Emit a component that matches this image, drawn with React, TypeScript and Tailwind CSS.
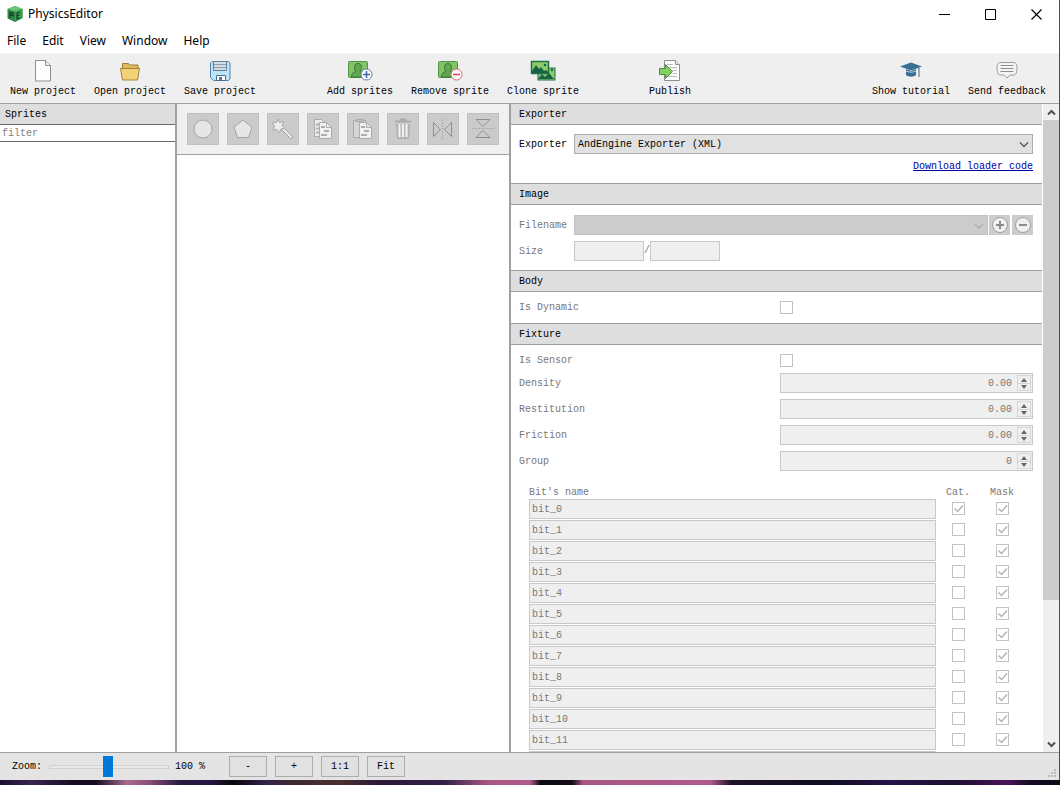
import React, { useState } from "react";

const NewIcon = () => (
  <svg width="24" height="24" viewBox="0 0 24 24">
    <path d="M4.500 1.500h10l5 5v15.500h-15z" fill="#fdfdfd" stroke="#8f8f8f" />
    <path d="M14.500 1.500v5h5" fill="#ececec" stroke="#8f8f8f" />
  </svg>
);

const OpenIcon = () => (
  <svg width="24" height="24" viewBox="0 0 24 24">
    <path d="M4.500 9V4.500h6l1.500 1.500h8V9" fill="#e5bd58" stroke="#9c7c3a" />
    <path d="M2.500 9.500h19l-2 11.500h-15z" fill="#f3d277" stroke="#a5823c" />
  </svg>
);

const SaveIcon = () => (
  <svg width="24" height="24" viewBox="0 0 24 24">
    <path d="M4.500 2.500h16l1.500 1.500v16l-1.500 1.500h-15l-3-3V4z" fill="#bfe3f7" stroke="#4a86ad" />
    <path d="M5.500 2.500h13v9h-13z" fill="#d5dce2" stroke="#5b7f98" />
    <path d="M6 5.500h12M6 8.500h12" stroke="#8d9fae" />
    <path d="M8.500 16.500h9v5h-9z" fill="#fff" stroke="#4a6f8c" />
    <path d="M11 18h3v3h-3z" fill="#5f7787" />
  </svg>
);

function PersonCard() {
  return (
    <>
      <rect x="1.500" y="2.500" width="19" height="16" rx="1" fill="#83c369" stroke="#4c9447" />
      <path d="M4.500 18c0-3.500 1.500-4.500 4.500-5.500C6.500 9 7 4.500 11 4.500s4.500 4.500 2 8c3 1 4.500 2 4.500 5.500z" fill="#62a852" stroke="#357a38" />
    </>
  );
}

const AddIcon = () => (
  <svg width="26" height="24" viewBox="0 0 26 24">
    <PersonCard />
    <circle cx="19.500" cy="15.500" r="5.500" fill="#fff" stroke="#5b78ad" />
    <path d="M16 15.500h7M19.500 12v7" stroke="#3e62a3" strokeWidth="1.500" />
  </svg>
);

const RemoveIcon = () => (
  <svg width="26" height="24" viewBox="0 0 26 24">
    <PersonCard />
    <circle cx="19.500" cy="15.500" r="5.500" fill="#fff" stroke="#dc6468" />
    <path d="M16 15.500h7" stroke="#dc3f46" strokeWidth="1.500" />
  </svg>
);

const CloneIcon = () => (
  <svg width="26" height="24" viewBox="0 0 26 24">
    <rect x="8" y="9" width="17" height="12" fill="#8fcc6c" stroke="#20724a" />
    <path d="M8 20l4-5 3 3 4-4 5 6z" fill="#176344" />
    <circle cx="22" cy="11" r="1.200" fill="#176344" />
    <rect x="1.500" y="2.500" width="17" height="12" fill="#8fcc6c" stroke="#20724a" strokeWidth="1.500" />
    <path d="M2 14V12l4-6 3 4 2-2 3 4 2-1 2 2v1z" fill="#176344" />
    <circle cx="15" cy="6" r="1.300" fill="#176344" />
  </svg>
);

const PublishIcon = () => (
  <svg width="24" height="24" viewBox="0 0 24 24">
    <path d="M6.500 1.500h11l4 4v16h-15z" fill="#fbfbfb" stroke="#8f8f8f" />
    <path d="M17.500 1.500v4h4" fill="#e6e6e6" stroke="#8f8f8f" />
    <path d="M9 5.500h6M9 8.500h10M15 11.500h4M15 14.500h4M9 17.500h10" stroke="#bcbcbc" />
    <path d="M1.500 9.500h6v-4l7 7-7 7v-4h-6z" fill="#83cf62" stroke="#4a9140" />
  </svg>
);

const TutorialIcon = () => (
  <svg width="24" height="24" viewBox="0 0 24 24">
    <path d="M7 10v6c2 2.300 8 2.300 10 0v-6l-5 2z" fill="#3a6f94" />
    <path d="M1 7.500l11-4 11 4-11 4z" fill="#3a6f94" />
    <path d="M12 7.500l8 1.500v9" fill="none" stroke="#3a6f94" />
    <path d="M7 12c3 1.500 7 1.500 10 0" fill="none" stroke="#dfe7ec" strokeWidth="0.800" />
  </svg>
);

const FeedbackIcon = () => (
  <svg width="24" height="24" viewBox="0 0 24 24">
    <path d="M5.500 3.500h13c2.500 0 3.500 2 3.500 6s-1 6.500-3.500 6.500H15L12 19l-3-3H5.500C3 16 2 13.500 2 9.500s1-6 3.500-6z" fill="#f4f4f4" stroke="#999" />
    <path d="M5.500 6.500h13M5.500 9.500h13M5.500 12.500h13" stroke="#8e8e8e" />
  </svg>
);

const fileTools = [
  { label: "New project", icon: <NewIcon /> },
  { label: "Open project", icon: <OpenIcon /> },
  { label: "Save project", icon: <SaveIcon /> },
];
const spriteTools = [
  { label: "Add sprites", icon: <AddIcon /> },
  { label: "Remove sprite", icon: <RemoveIcon /> },
  { label: "Clone sprite", icon: <CloneIcon /> },
];
const publishTools = [{ label: "Publish", icon: <PublishIcon /> }];
const helpTools = [
  { label: "Show tutorial", icon: <TutorialIcon /> },
  { label: "Send feedback", icon: <FeedbackIcon /> },
];

function ToolGroup({ tools }: { tools: { label: string; icon: React.ReactNode }[] }) {
  return (
    <div className="flex gap-[18px]">
      {tools.map((t) => (
        <button key={t.label} className="flex flex-col items-center gap-[3px] whitespace-nowrap">
          {t.icon}
          <span className="leading-3">{t.label}</span>
        </button>
      ))}
    </div>
  );
}

const shapeTools = [
  {
    label: "Add circle",
    icon: <circle cx="16" cy="16" r="9" fill="#e6e6e6" stroke="#a5a5a5" />,
  },
  {
    label: "Add polygon",
    icon: <path d="M16 7l9 7-3.500 10.500h-11L7 14z" fill="#e6e6e6" stroke="#a5a5a5" />,
  },
  {
    label: "Trace shape",
    icon: (
      <>
        <path d="M14.500 16.500l2-2 9.500 9.500-2 2z" fill="#e9e9e9" stroke="#a0a0a0" />
        <path d="M11 6l1.500 3.500 4.500-1-2 4 3 3-4 .5-1.500 3.500-2.500-3-4 .5 1.500-4L5 10l4.500-.5z" fill="#ececec" stroke="#a8a8a8" />
      </>
    ),
  },
  {
    label: "Copy shapes",
    icon: (
      <>
        <path d="M7.500 6.500h7l3 3v14h-10z" fill="#ececec" stroke="#adadad" />
        <path d="M9 11.500h4M9 15.500h3M9 19.500h3" stroke="#b0b0b0" strokeWidth="2" />
        <path d="M12.500 9.500h7l5 5v11h-12z" fill="#f1f1f1" stroke="#adadad" />
        <path d="M19.500 9.500v5h5" fill="none" stroke="#adadad" />
        <path d="M14 14h4M17 18h5M14 22h6" stroke="#adadad" strokeWidth="2" />
      </>
    ),
  },
  {
    label: "Paste shapes",
    icon: (
      <>
        <path d="M6.500 7.500h12v17h-12z" fill="#d6d6d6" stroke="#a8a8a8" />
        <path d="M9 6.500h7v2H9z" fill="#c2c2c2" stroke="#ababab" />
        <path d="M12.500 9.500h7l5 5v11h-12z" fill="#f1f1f1" stroke="#adadad" />
        <path d="M19.500 9.500v5h5" fill="none" stroke="#adadad" />
        <path d="M14 14h4M17 18h5M14 22h6" stroke="#adadad" strokeWidth="2" />
      </>
    ),
  },
  {
    label: "Delete shapes",
    icon: (
      <>
        <path d="M8 8.500h16M13 6.500h6" stroke="#ababab" strokeWidth="2" />
        <path d="M9.500 11.500h13l-1 14h-11z" fill="#b8b8b8" stroke="#adadad" />
        <path d="M12.500 11v13M16 11v13M19.500 11v13" stroke="#f1f1f1" strokeWidth="2" />
      </>
    ),
  },
  {
    label: "Flip horizontally",
    icon: (
      <>
        <path d="M6.500 9.500v14l7-7zM24.500 9.500v14l-7-7z" fill="none" stroke="#8e8e8e" />
        <path d="M15.500 6v20" stroke="#acacac" strokeDasharray="2 1" />
      </>
    ),
  },
  {
    label: "Flip vertically",
    icon: (
      <>
        <path d="M9 6.500h14l-7 7zM9 24.500h14l-7-7z" fill="none" stroke="#8e8e8e" />
        <path d="M5 15.500h23" stroke="#acacac" strokeDasharray="2 1" />
      </>
    ),
  },
];

function SectionHeader({ title, first }: { title: string; first?: boolean }) {
  return (
    <h2
      className={
        "flex h-[22px] items-center border-y border-[#a0a0a0] bg-[#dedede] pt-0.5 pl-2 text-black " +
        (first ? "-mt-px" : "")
      }
    >
      {title}
    </h2>
  );
}

function Check({ id, label, checked }: { id?: string; label?: string; checked?: boolean }) {
  return (
    <span className="relative block size-[13px]">
      <input
        id={id}
        type="checkbox"
        aria-label={label}
        defaultChecked={checked}
        disabled
        className="peer block size-[13px] appearance-none border border-[#c3c3c3] bg-white"
      />
      <svg viewBox="0 0 13 13" className="pointer-events-none absolute inset-0 hidden peer-checked:block">
        <path d="M2.500 6.500l3 3 5.500-6" fill="none" stroke="#b5b5b5" strokeWidth="1.500" />
      </svg>
    </span>
  );
}

function SpinRow({ id, label, value }: { id: string; label: string; value: string }) {
  return (
    <>
      <label htmlFor={id} className="pt-0.5">{label}</label>
      <div className="flex h-5 items-center border border-[#c8c8c8] bg-[#efefef] pr-px">
        <input id={id} defaultValue={value} disabled className="min-w-0 flex-1 pt-px pr-[5px] text-right" />
        <div className="flex w-3.5 flex-col border border-[#d6d6d6]">
          <button disabled aria-label={label + " up"} className="flex h-[7px] items-center justify-center">
            <svg width="6" height="4" viewBox="0 0 6 4"><path d="M0 4l3-4 3 4z" fill="#666" /></svg>
          </button>
          <button disabled aria-label={label + " down"} className="flex h-[7px] items-center justify-center border-t border-[#d6d6d6]">
            <svg width="6" height="4" viewBox="0 0 6 4"><path d="M0 0l3 4 3-4z" fill="#666" /></svg>
          </button>
        </div>
      </div>
    </>
  );
}

const spins = [
  { id: "density", label: "Density", value: "0.00" },
  { id: "restitution", label: "Restitution", value: "0.00" },
  { id: "friction", label: "Friction", value: "0.00" },
  { id: "group", label: "Group", value: "0" },
];
const bits = Array.from({ length: 16 }, (_, i) => "bit_" + i);
const menus = ["File", "Edit", "View", "Window", "Help"];
const zoomButtons = ["-", "+", "1:1", "Fit"];

export default function App() {
  const [zoom, setZoom] = useState(100);
  const [filter, setFilter] = useState("");

  return (
    <div className="flex h-screen flex-col bg-[#140d20] font-['Liberation_Mono',monospace] text-[10px] leading-3 text-black">
      <div className="flex min-h-0 flex-1 flex-col border-r border-[#4b4b58] bg-white">
        {/* title bar */}
        <header className="flex h-7 shrink-0 items-center pl-[7px] font-['Noto_Sans',sans-serif] text-xs">
          <svg width="16" height="16" viewBox="0 0 16 16">
            <path d="M8 0l7.500 3v9L8 16 .5 12.500V3z" fill="#2d8a45" />
            <path d="M8 0l7.500 3L8 5.500.5 3z" fill="#6cc47b" />
            <path d="M8 5.500L15.500 3v9L8 16z" fill="#38a053" />
            <path d="M3 12V6.500l3 .8v2.500l-3-.6M13 6.500l-3 .8v5.500l3-1M10 10l2.500-.8" fill="none" stroke="#123d1f" strokeWidth="1.200" />
          </svg>
          <h1 className="flex-1 pl-[5px]">PhysicsEditor</h1>
          <button aria-label="Minimize" className="flex h-7 w-[46px] items-center justify-center">
            <svg width="11" height="11" viewBox="0 0 11 11"><path d="M0 5.500h11" stroke="#000" /></svg>
          </button>
          <button aria-label="Maximize" className="flex h-7 w-[46px] items-center justify-center">
            <svg width="11" height="11" viewBox="0 0 11 11"><path d="M.5.5h10v10H.5z" fill="none" stroke="#000" /></svg>
          </button>
          <button aria-label="Close" className="flex h-7 w-[46px] items-center justify-center">
            <svg width="11" height="11" viewBox="0 0 11 11"><path d="M.5.5l10 10M10.500.5l-10 10" stroke="#000" strokeWidth="1.200" /></svg>
          </button>
        </header>

        <nav className="flex h-[26px] shrink-0 items-center gap-4 border-b border-[#f0f0f0] pt-px pl-[7px] font-['Noto_Sans',sans-serif] text-xs">
          {menus.map((m) => (
            <button key={m}>{m}</button>
          ))}
        </nav>

        {/* main toolbar */}
        <div className="flex h-[50px] shrink-0 items-center border-b border-[#a0a0a0] bg-[#efefef] pr-[13px] pl-2.5">
          <ToolGroup tools={fileTools} />
          <div className="w-[71px]" />
          <ToolGroup tools={spriteTools} />
          <div className="w-[70px]" />
          <ToolGroup tools={publishTools} />
          <div className="flex-1" />
          <ToolGroup tools={helpTools} />
        </div>

        <main className="flex min-h-0 flex-1">
          {/* sprites list */}
          <aside className="w-[177px] shrink-0 border-r-2 border-[#a0a0a0]">
            <h2 className="flex h-5 items-center bg-[#dedede] pt-0.5 pl-[5px]">Sprites</h2>
            <input
              aria-label="Filter sprites"
              placeholder="filter"
              value={filter}
              onChange={(e) => setFilter(e.target.value)}
              autoFocus
              className="block h-[18px] w-full border-y border-[#6a6a6a] bg-white pl-0.5 outline-none placeholder:text-[#808080]"
            />
          </aside>

          {/* canvas */}
          <section className="w-[334px] shrink-0 border-r-2 border-[#a0a0a0]">
            <div className="flex h-[51px] items-center gap-2 border-b border-[#a0a0a0] bg-[#f0f0f0] pl-2.5">
              {shapeTools.map((t) => (
                <button key={t.label} aria-label={t.label} disabled className="size-8 bg-[#cbcbcb] outline outline-offset-[-1px] outline-[#c0c0c0]">
                  <svg width="32" height="32" viewBox="0 0 32 32">{t.icon}</svg>
                </button>
              ))}
            </div>
          </section>

          {/* properties */}
          <section className="flex min-w-0 flex-1 gap-px">
            <div className="min-w-0 flex-1 overflow-y-auto text-[#787878] [scrollbar-width:none]">
              <SectionHeader title="Exporter" first />
              <div className="pt-[9px] pr-[9px] pb-2.5 pl-2 text-black">
                <div className="flex items-center">
                  <label htmlFor="exporter" className="w-[55px] pt-0.5">Exporter</label>
                  <div className="relative flex-1">
                    <select id="exporter" className="block h-5 w-full appearance-none border border-[#adadad] bg-[#e1e1e1] pt-0.5 pl-[3px]">
                      <option>AndEngine Exporter (XML)</option>
                    </select>
                    <svg width="10" height="6" viewBox="0 0 10 6" className="pointer-events-none absolute top-[8px] right-1">
                      <path d="M1 .5l4 4 4-4" fill="none" stroke="#555" strokeWidth="1.300" />
                    </svg>
                  </div>
                </div>
                <div className="mt-[7px] text-right">
                  <a href="#loader" className="block text-[#0000a8] underline">Download loader code</a>
                </div>
              </div>

              <SectionHeader title="Image" />
              <div className="flex flex-col gap-1.5 pt-2.5 pr-[9px] pb-[9px] pl-2">
                <div className="flex items-center">
                  <label htmlFor="filename" className="w-[55px] pt-0.5">Filename</label>
                  <div className="relative flex-1">
                    <select id="filename" disabled className="block h-5 w-full appearance-none border border-[#c2c2c2] bg-[#cccccc] opacity-100" />
                    <svg width="10" height="6" viewBox="0 0 10 6" className="pointer-events-none absolute top-[8px] right-1">
                      <path d="M1 1l4 4 4-4" fill="none" stroke="#adadad" strokeWidth="1.300" />
                    </svg>
                  </div>
                  <button disabled aria-label="Add image" className="ml-px flex h-5 w-[21px] items-center justify-center bg-[#cccccc]">
                    <svg width="18" height="18" viewBox="0 0 18 18">
                      <circle cx="9" cy="9" r="7.500" fill="#f0f0f0" stroke="#a0a0a0" />
                      <path d="M5 9h8M9 5v8" stroke="#8c8c8c" strokeWidth="2" />
                    </svg>
                  </button>
                  <button disabled aria-label="Remove image" className="ml-0.5 flex h-5 w-[21px] items-center justify-center bg-[#cccccc]">
                    <svg width="18" height="18" viewBox="0 0 18 18">
                      <circle cx="9" cy="9" r="7.500" fill="#f0f0f0" stroke="#a0a0a0" />
                      <path d="M5 9h8" stroke="#8c8c8c" strokeWidth="2" />
                    </svg>
                  </button>
                </div>
                <div className="flex items-center">
                  <label htmlFor="width" className="w-[55px] pt-0.5">Size</label>
                  <input id="width" disabled className="h-5 w-[70px] border border-[#c8c8c8] bg-[#efefef]" />
                  <span>/</span>
                  <input aria-label="Height" disabled className="h-5 w-[70px] border border-[#c8c8c8] bg-[#efefef]" />
                </div>
              </div>

              <SectionHeader title="Body" />
              <div className="grid grid-cols-2 items-center gap-2 py-[9px] pr-[9px] pl-2">
                <label htmlFor="dynamic">Is Dynamic</label>
                <Check id="dynamic" />
              </div>

              <SectionHeader title="Fixture" />
              <div className="grid grid-cols-2 items-center gap-x-2 gap-y-1.5 pt-[9px] pr-[9px] pl-2">
                <label htmlFor="sensor">Is Sensor</label>
                <Check id="sensor" />
                {spins.map((s) => (
                  <SpinRow key={s.id} id={s.id} label={s.label} value={s.value} />
                ))}
              </div>

              <div className="px-[18px] pt-[15px] pb-4">
                <table className="w-full table-fixed">
                  <thead>
                    <tr className="h-[13px]">
                      <th className="p-0 text-left font-normal">Bit's name</th>
                      <th className="w-11 p-0 font-normal">Cat.</th>
                      <th className="w-11 p-0 font-normal">Mask</th>
                    </tr>
                  </thead>
                  <tbody>
                    {bits.map((b, i) => (
                      <tr key={b} className="h-[21px]">
                        <td className="p-0 align-top">
                          <input aria-label={b + " name"} defaultValue={b} disabled className="block h-5 w-full border border-[#c8c8c8] bg-[#efefef] pl-0.5" />
                        </td>
                        <td className="p-0 align-top">
                          <div className="flex justify-center pt-[3px]"><Check label={b + " category"} checked={i === 0} /></div>
                        </td>
                        <td className="p-0 align-top">
                          <div className="flex justify-center pt-[3px]"><Check label={b + " mask"} checked /></div>
                        </td>
                      </tr>
                    ))}
                  </tbody>
                </table>
              </div>
            </div>

            {/* scroll bar */}
            <div className="flex w-4 shrink-0 flex-col bg-[#efefef]">
              <button aria-label="Scroll up" className="flex h-4 items-center justify-center">
                <svg width="9" height="7" viewBox="0 0 9 7"><path d="M1 5.500L4.500 2 8 5.500" fill="none" stroke="#505050" strokeWidth="2" /></svg>
              </button>
              <div className="flex-1">
                <div className="h-[78%] bg-[#cdcdcd]" />
              </div>
              <button aria-label="Scroll down" className="flex h-4 items-center justify-center">
                <svg width="9" height="7" viewBox="0 0 9 7"><path d="M1 1.500L4.500 5 8 1.500" fill="none" stroke="#505050" strokeWidth="2" /></svg>
              </button>
            </div>
          </section>
        </main>

        {/* status bar */}
        <footer className="flex h-7 shrink-0 items-center border-t border-[#a0a0a0] bg-[#e4e4e4] pr-0.5 pl-3">
          <label htmlFor="zoom" className="w-[37px]">Zoom:</label>
          <input
            id="zoom"
            type="range"
            min="0"
            max="202"
            value={zoom}
            onChange={(e) => setZoom(Number(e.target.value))}
            className="h-[21px] w-[120px] appearance-none bg-transparent [&::-webkit-slider-runnable-track]:h-1 [&::-webkit-slider-runnable-track]:border [&::-webkit-slider-runnable-track]:border-[#d2d2d2] [&::-webkit-slider-runnable-track]:bg-[#e7eaea] [&::-webkit-slider-thumb]:-mt-2.5 [&::-webkit-slider-thumb]:h-[21px] [&::-webkit-slider-thumb]:w-2.5 [&::-webkit-slider-thumb]:appearance-none [&::-webkit-slider-thumb]:bg-[#0078d7]"
          />
          <span className="w-[60px] pl-1.5">{zoom} %</span>
          <div className="flex gap-2">
            {zoomButtons.map((b) => (
              <button key={b} className="h-[21px] w-[38px] border border-[#adadad] bg-[#e1e1e1]">{b}</button>
            ))}
          </div>
          <svg width="9" height="9" viewBox="0 0 9 9" className="mb-0.5 ml-auto self-end">
            <path d="M6 0h2v2H6zM3 3h2v2H3zM6 3h2v2H6zM0 6h2v2H0zM3 6h2v2H3zM6 6h2v2H6z" fill="#bdbdbd" />
          </svg>
        </footer>
      </div>

      {/* desktop behind the window */}
      <div className="h-[5px] shrink-0 bg-[linear-gradient(90deg,#1a1030_0%,#3a2450_3%,#160c22_7%,#140c20_9%,#a86a90_12%,#8a5078_14%,#2a1840_17%,#231640_20%,#08060c_22%,#33204a_25%,#3f2a30_28%,#4a3030_32%,#2a1838_36%,#33204a_42%,#a85684_46%,#b05a8c_50%,#0c0a12_51%,#120c18_54%,#a85684_55%,#b05a8c_67%,#1c1228_69%,#120c20_78%,#241448_84%,#1a1030_90%,#4a1458_95%,#160c24_97%,#0c0814_100%)]" />
    </div>
  );
}
